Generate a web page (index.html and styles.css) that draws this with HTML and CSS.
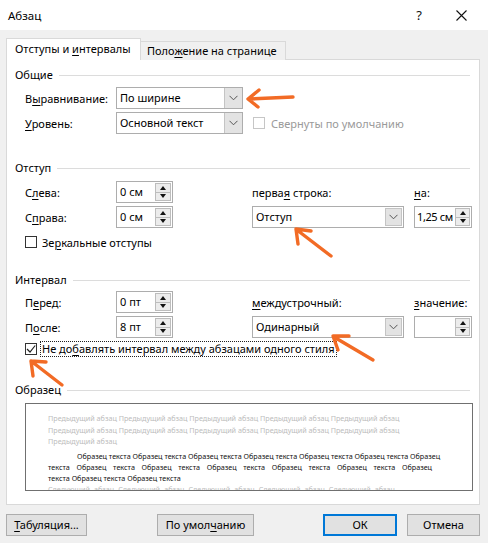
FILE: index.html
```html
<!DOCTYPE html>
<html lang="ru">
<head>
<meta charset="utf-8">
<title>Абзац</title>
<link rel="stylesheet" href="styles.css">
</head>
<body>
<div class="window">
  <div class="titlebar">
    <span class="title">Абзац</span>
    <span class="help">?</span>
    <svg class="close" width="11" height="11" viewBox="0 0 11 11"><path d="M0.5 0.5 L10.5 10.5 M10.5 0.5 L0.5 10.5" stroke="#111" stroke-width="1.1" fill="none"/></svg>
  </div>
  <div class="content">
    <div class="tabs">
      <div class="tab active">Отступы и <u>и</u>нтервалы</div>
      <div class="tab">Поло<u>ж</u>ение на странице</div>
    </div>
    <div class="panel">
      <div class="ghead first"><span>Общие</span><i></i></div>
      <div class="grid g1">
        <div class="lbl">В<u>ы</u>равнивание:</div>
        <div class="combo w127"><span>По ширине</span><b class="drop"><svg width="9" height="6" viewBox="0 0 9 6"><path d="M0.5 0.8 L4.5 4.8 L8.5 0.8" stroke="#555" fill="none"/></svg></b></div>
        <div></div><div></div>
        <div class="lbl"><u>У</u>ровень:</div>
        <div class="combo w127"><span>Основной текст</span><b class="drop"><svg width="9" height="6" viewBox="0 0 9 6"><path d="M0.5 0.8 L4.5 4.8 L8.5 0.8" stroke="#555" fill="none"/></svg></b></div>
        <div class="check disabled span2"><span class="box"></span><span>Свернуты по умолчанию</span></div>
      </div>

      <div class="ghead g2h"><span>Отступ</span><i></i></div>
      <div class="grid g2">
        <div class="lbl">С<u>л</u>ева:</div>
        <div class="spin w57"><span>0 см</span><b class="btns"><i class="up"></i><i class="dn"></i></b></div>
        <div class="lbl">перва<u>я</u> строка:</div>
        <div class="lbl"><u>н</u>а:</div>
        <div class="lbl">С<u>п</u>рава:</div>
        <div class="spin w57"><span>0 см</span><b class="btns"><i class="up"></i><i class="dn"></i></b></div>
        <div class="combo w152"><span>Отступ</span><b class="drop"><svg width="9" height="6" viewBox="0 0 9 6"><path d="M0.5 0.8 L4.5 4.8 L8.5 0.8" stroke="#555" fill="none"/></svg></b></div>
        <div class="spin w58"><span>1,25 см</span><b class="btns"><i class="up"></i><i class="dn"></i></b></div>
      </div>
      <div class="check row mirror"><span class="box"></span><span>Зе<u>р</u>кальные отступы</span></div>

      <div class="ghead g3h"><span>Интервал</span><i></i></div>
      <div class="grid g3">
        <div class="lbl">П<u>е</u>ред:</div>
        <div class="spin w57"><span>0 пт</span><b class="btns"><i class="up"></i><i class="dn"></i></b></div>
        <div class="lbl"><u>м</u>еждустрочный:</div>
        <div class="lbl"><u>з</u>начение:</div>
        <div class="lbl">П<u>о</u>сле:</div>
        <div class="spin w57"><span>8 пт</span><b class="btns"><i class="up"></i><i class="dn"></i></b></div>
        <div class="combo w152"><span>Одинарный</span><b class="drop"><svg width="9" height="6" viewBox="0 0 9 6"><path d="M0.5 0.8 L4.5 4.8 L8.5 0.8" stroke="#555" fill="none"/></svg></b></div>
        <div class="spin w58"><span></span><b class="btns"><i class="up"></i><i class="dn"></i></b></div>
      </div>
      <div class="check row nospace"><span class="box checked"><svg width="10" height="10" viewBox="0 0 10 10"><path d="M1 5 L4 8 L9.2 1.5" stroke="#222" stroke-width="1.2" fill="none"/></svg></span><span class="focus">Не до<u>б</u>авлять интервал между абзацами одного стиля</span></div>

      <div class="ghead g4h"><span>Образец</span><i></i></div>
      <div class="sample">
        <div class="sl prev">Предыдущий абзац Предыдущий абзац Предыдущий абзац Предыдущий абзац Предыдущий абзац</div>
        <div class="sl prev">Предыдущий абзац Предыдущий абзац Предыдущий абзац Предыдущий абзац Предыдущий абзац</div>
        <div class="sl prev last">Предыдущий абзац</div>
        <div class="sl cur indent">Образец текста Образец текста Образец текста Образец текста Образец текста Образец текста Образец</div>
        <div class="sl cur">текста Образец текста Образец текста Образец текста Образец текста Образец текста Образец</div>
        <div class="sl cur last">текста Образец текста Образец текста</div>
        <div class="sl prev">Следующий абзац Следующий абзац Следующий абзац Следующий абзац Следующий абзац</div>
      </div>
    </div>
    <div class="footer">
      <button class="btn b-tab"><u>Т</u>абуляция...</button>
      <button class="btn b-def">По умол<u>ч</u>анию</button>
      <span class="spacer"></span>
      <button class="btn b-ok">ОК</button>
      <button class="btn b-cancel">Отмена</button>
    </div>
  </div>
  <svg class="annot" width="488" height="543" viewBox="0 0 488 543">
    <g stroke="#f26b25" stroke-width="3.4" stroke-linecap="round" stroke-linejoin="round" fill="none">
      <path d="M293 97 Q272 98 249 99 M259 90 L248 99 L258 107"/>
      <path d="M331 256 L297 230 M296 229 L311 231 M296 229 L298 244"/>
      <path d="M373 360 L334 337 M333 336 L349 336 M333 336 L338 350"/>
      <path d="M62 385 L31 361 M31 361 L46 362 M31 361 L33 376"/>
    </g>
  </svg>
</div>
</body>
</html>
```
FILE: styles.css
```css
* { box-sizing: border-box; }
html, body { margin: 0; padding: 0; }
body {
  width: 488px;
  height: 543px;
  overflow: hidden;
  background: #f0f0f0;
  font-family: "Noto Sans", "Segoe UI", sans-serif;
  font-size: 11px;
  color: #000;
}
.window { position: relative; width: 488px; height: 543px; }
u { text-decoration: underline; text-underline-offset: 2px; text-decoration-thickness: 1px; }

.titlebar {
  height: 30px;
  background: #fff;
  display: flex;
  align-items: center;
  padding-left: 8px;
}
.title { flex: 1; font-size: 11.5px; }
.help { font-size: 13px; margin-right: 34px; color: #111; }
.close { margin-right: 21px; }

.content { padding: 8px 8px 0 6px; }

.tabs { display: flex; align-items: flex-end; margin-bottom: -1px; height: 22px; }
.tab {
  position: relative;
  height: 19px;
  border: 1px solid #d9d9d9;
  border-bottom: none;
  background: #f0f0f0;
  padding-left: 6px;
  line-height: 17px;
  width: 146px;
  margin-left: -1px;
  white-space: nowrap;
}
.tab.active {
  z-index: 1;
  height: 22px;
  background: #fff;
  width: 135px;
  margin-left: 0;
  padding-left: 8px;
  line-height: 20px;
}

.panel {
  background: #fff;
  border: 1px solid #d9d9d9;
  height: 446px;
  padding: 7px 9px 0 8px;
}

.ghead { display: flex; align-items: center; height: 16px; line-height: 16px; }
.ghead span { margin-right: 6px; }
.ghead i { flex: 1; height: 1px; background: #dcdcdc; }
.g2h { margin-top: 26px; }
.g3h { margin-top: 22px; }
.g4h { margin-top: 25px; }

.grid {
  display: grid;
  grid-template-columns: 91px 136px 162px 58px;
  grid-auto-rows: 22px;
  row-gap: 3px;
  align-items: center;
  margin-left: 10px;
}
.g1 { margin-top: 4px; }
.g2 { margin-top: 5px; }
.g3 { margin-top: 3px; }
.lbl { white-space: nowrap; }
.span2 { grid-column: 3 / span 2; margin-left: 1px; }

.combo, .spin {
  height: 22px;
  border: 1px solid #adadad;
  background: #fff;
  display: flex;
  align-items: stretch;
}
.combo span, .spin span { flex: 1; padding-left: 3px; line-height: 20px; white-space: nowrap; overflow: hidden; }
.w127 { width: 127px; }
.w152 { width: 152px; }
.w57 { width: 57px; }
.w58 { width: 58px; }
.w58 span { padding-left: 2px; letter-spacing: -0.4px; }
.drop {
  width: 18px;
  background: #e3e3e3;
  border-left: 1px solid #c4c4c4;
  display: flex;
  align-items: center;
  justify-content: center;
}
.w152 .drop { margin: 1px; border: 1px solid #c4c4c4; width: 17px; }
.btns {
  width: 16px;
  flex: none;
  margin: 1px;
  border: 1px solid #bdbdbd;
  background: #ececec;
  display: flex;
  flex-direction: column;
}
.w58 .btns { width: 15px; margin-left: 0; }
.btns i { flex: 1; display: flex; align-items: center; justify-content: center; }
.btns .up { border-bottom: 1px solid #bdbdbd; }
.btns .up::after {
  content: "";
  border-left: 3.5px solid transparent;
  border-right: 3.5px solid transparent;
  border-bottom: 4px solid #111;
}
.btns .dn::after {
  content: "";
  border-left: 3.5px solid transparent;
  border-right: 3.5px solid transparent;
  border-top: 4px solid #111;
}

.check { display: flex; align-items: center; white-space: nowrap; }
.check .box {
  width: 12px;
  height: 12px;
  border: 1px solid #333;
  background: #fff;
  margin-right: 5px;
  display: flex;
  align-items: center;
  justify-content: center;
  flex: none;
}
.check.disabled { color: #9a9a9a; }
.check.disabled .box { border-color: #c6c6c6; margin-right: 6px; }
.check.row { margin-left: 10px; height: 16px; }
.mirror { margin-top: 6px; }
.nospace { margin-top: 3px; }
.nospace .box { margin-right: 3px; }
.focus { border: 1px dotted #222; padding: 0 1px; line-height: 14px; }

.sample {
  margin: 5px 0 0 10px;
  width: 448px;
  height: 88px;
  border: 1px solid #707070;
  background: #fff;
  overflow: hidden;
  padding: 9px 0 0 22px;
  font-family: "Noto Sans", sans-serif;
  font-size: 7.2px;
}
.sl { white-space: nowrap; line-height: 11.5px; height: 11.5px; }
.sl.prev { color: #bcbcbc; width: 347px; text-align: justify; text-align-last: justify; }
.sl.prev.last { text-align-last: left; margin-bottom: 3.5px; }
.sl.cur { color: #111; width: 384px; text-align: justify; text-align-last: justify; line-height: 11px; height: 11px; }
.sl.cur.indent { padding-left: 29px; }
.sl.cur.last { text-align-last: left; }

.footer { display: flex; align-items: center; margin-top: 9px; }
.btn {
  height: 22px;
  border: 1px solid #adadad;
  background: #e1e1e1;
  font-family: "Noto Sans", sans-serif;
  font-size: 11px;
  color: #000;
  padding: 0;
  line-height: 18px;
}
.b-tab { width: 81px; }
.b-def { width: 97px; margin-left: 70px; }
.spacer { flex: 1; }
.b-ok { width: 74px; border: 2px solid #0078d7; margin-right: 10px; }
.b-cancel { width: 73px; }

.annot { position: absolute; left: 0; top: 0; pointer-events: none; }
```
